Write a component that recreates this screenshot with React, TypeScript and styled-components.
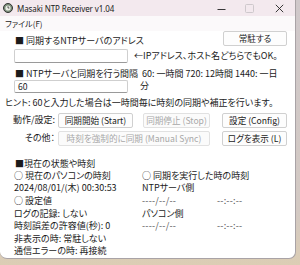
import React from "react";
import styled, { createGlobalStyle } from "styled-components";

const GlobalStyle = createGlobalStyle`
  html, body { margin: 0; padding: 0; }
  body {
    width: 300px;
    height: 265px;
    overflow: hidden;
    font-family: "Noto Sans CJK JP", "Noto Sans", sans-serif;
    color: #1b1b1b;
  }
`;

const Desktop = styled.div`
  width: 300px;
  height: 265px;
  background: linear-gradient(180deg, #cfc8ca 0%, #d3c9c3 80%, #dccdb4 100%);
`;

const Window = styled.div`
  width: 296px;
  height: 259px;
  box-sizing: border-box;
  border: 1px solid #a9a3a6;
  border-top: none;
  border-left: none;
  border-radius: 0 0 7px 7px;
  background: #ffffff;
  overflow: hidden;
  display: flex;
  flex-direction: column;
`;

const TitleBar = styled.div`
  height: 16px;
  background: #f3e9ee;
  display: flex;
  align-items: center;
  padding-left: 3px;
`;

const TitleText = styled.span`
  font-family: "Noto Sans", "Open Sans", sans-serif;
  font-size: 8px;
  margin-left: 4px;
  letter-spacing: -0.1px;
  color: #1a1a1a;
`;

const Spacer = styled.div`
  flex: 1;
`;

const CaptionButton = styled.div<{ $w: number }>`
  width: ${(p) => p.$w}px;
  height: 16px;
  display: flex;
  align-items: center;
  justify-content: center;
`;

const MenuBar = styled.div`
  height: 15px;
  display: flex;
  align-items: center;
  padding-left: 5px;
  font-size: 8px;
  background: #fbf9fa;
  font-feature-settings: "palt";
`;

const Client = styled.div`
  padding: 0 8px 0 5px;
  font-size: 9px;
  line-height: 12px;
  font-feature-settings: "palt";
  display: flex;
  flex-direction: column;
`;

const TopRow = styled.div`
  height: 16px;
  display: flex;
  justify-content: space-between;
`;

const Heading = styled.div<{ $indent?: number }>`
  padding-left: ${(p) => p.$indent ?? 10}px;
  align-self: flex-end;
  white-space: nowrap;
`;

const Button = styled.div<{ $w: number; $disabled?: boolean }>`
  width: ${(p) => p.$w}px;
  height: 15px;
  box-sizing: border-box;
  border: 1px solid ${(p) => (p.$disabled ? "#e1e1e1" : "#d0d0d0")};
  border-radius: 2px;
  background: ${(p) => (p.$disabled ? "#fbfbfb" : "#fdfdfd")};
  color: ${(p) => (p.$disabled ? "#a8a8a8" : "#1b1b1b")};
  font-size: 8.6px;
  display: flex;
  align-items: center;
  justify-content: center;
  white-space: nowrap;
  overflow: hidden;
`;

const FieldRow = styled.div<{ $top: number; $h: number }>`
  margin-top: ${(p) => p.$top}px;
  height: ${(p) => p.$h}px;
  display: flex;
  align-items: center;
  white-space: nowrap;
`;

const TextBox = styled.div<{ $h: number }>`
  margin-left: 9px;
  width: 114px;
  height: ${(p) => p.$h}px;
  box-sizing: border-box;
  border: 1px solid #cfcfcf;
  border-bottom-color: #9a9a9a;
  border-radius: 2px;
  background: #fff;
  display: flex;
  align-items: center;
  padding-left: 3px;
  font-size: 8.6px;
`;

const Note = styled.span<{ $left: number }>`
  margin-left: ${(p) => p.$left}px;
`;

const SplitRow = styled.div<{ $top: number }>`
  margin-top: ${(p) => p.$top}px;
  height: 12px;
  display: grid;
  grid-template-columns: 137px auto;
  white-space: nowrap;
`;

const Hint = styled.div`
  margin-top: 4px;
  height: 12px;
  white-space: nowrap;
`;

const ButtonRow = styled.div<{ $top: number }>`
  margin-top: ${(p) => p.$top}px;
  height: 15px;
  display: flex;
  align-items: center;
  white-space: nowrap;
`;

const RowLabel = styled.div`
  width: 53px;
  box-sizing: border-box;
  padding-right: 3px;
  text-align: right;
`;

const Gap = styled.div<{ $w: number }>`
  width: ${(p) => p.$w}px;
`;

const StatusGrid = styled.div`
  display: grid;
  grid-template-columns: 128px 75px auto;
  grid-auto-rows: 12.6px;
  padding-left: 9px;
  line-height: 12.6px;
  white-space: nowrap;
`;

const Cell = styled.div<{ $span?: number }>`
  grid-column: span ${(p) => p.$span ?? 1};
`;

const Dash = styled.span`
  color: #555;
  letter-spacing: 0.2px;
`;

const AppIcon = () => (
  <svg width="10" height="10" viewBox="0 0 10 10">
    <circle cx="5" cy="5" r="4.5" fill="#7d8f7a" stroke="#333" strokeWidth="1" />
    <circle cx="5" cy="5" r="2.6" fill="#e9ece4" />
    <path d="M5 3.2 V5 H6.4" stroke="#333" strokeWidth="0.8" fill="none" />
  </svg>
);

const App: React.FC = () => (
  <>
    <GlobalStyle />
    <Desktop>
      <Window>
        <TitleBar>
          <AppIcon />
          <TitleText>Masaki NTP Receiver v1.04</TitleText>
          <Spacer />
          <CaptionButton $w={28}>
            <svg width="9" height="9" viewBox="0 0 9 9">
              <path d="M0.5 5.5 H8.5" stroke="#222" strokeWidth="0.9" />
            </svg>
          </CaptionButton>
          <CaptionButton $w={28}>
            <svg width="9" height="9" viewBox="0 0 9 9">
              <rect x="0.5" y="0.5" width="8" height="8" rx="1" fill="none" stroke="#c9c4c7" strokeWidth="0.9" />
            </svg>
          </CaptionButton>
          <CaptionButton $w={32}>
            <svg width="9" height="9" viewBox="0 0 9 9">
              <path d="M0.8 0.8 L8.2 8.2 M8.2 0.8 L0.8 8.2" stroke="#222" strokeWidth="0.9" />
            </svg>
          </CaptionButton>
        </TitleBar>
        <MenuBar>ファイル(F)</MenuBar>
        <Client>
          <TopRow>
            <Heading>■ 同期するNTPサーバのアドレス</Heading>
            <Button $w={64}>常駐する</Button>
          </TopRow>
          <FieldRow $top={2} $h={14}>
            <TextBox $h={14} />
            <Note $left={6}>←IPアドレス、ホスト名どちらでもOK。</Note>
          </FieldRow>
          <SplitRow $top={5}>
            <Heading>■ NTPサーバと同期を行う間隔</Heading>
            <span>60: 一時間 720: 12時間 1440: 一日</span>
          </SplitRow>
          <FieldRow $top={0} $h={13}>
            <TextBox $h={13}>60</TextBox>
            <Note $left={12}>分</Note>
          </FieldRow>
          <Hint>ヒント: 60と入力した場合は一時間毎に時刻の同期や補正を行います。</Hint>
          <ButtonRow $top={4}>
            <RowLabel>動作/設定:</RowLabel>
            <Button $w={75}>同期開始 (Start)</Button>
            <Gap $w={10} />
            <Button $w={67} $disabled>同期停止 (Stop)</Button>
            <Gap $w={12} />
            <Button $w={65}>設定 (Config)</Button>
          </ButtonRow>
          <ButtonRow $top={3}>
            <RowLabel>その他：</RowLabel>
            <Button $w={152} $disabled>時刻を強制的に同期 (Manual Sync)</Button>
            <Gap $w={12} />
            <Button $w={65}>ログを表示 (L)</Button>
          </ButtonRow>
          <SplitRow $top={12}>
            <Heading>■現在の状態や時刻</Heading>
          </SplitRow>
          <StatusGrid>
            <Cell>○ 現在のパソコンの時刻</Cell>
            <Cell $span={2}>○ 同期を実行した時の時刻</Cell>
            <Cell>2024/08/01/(木) 00:30:53</Cell>
            <Cell $span={2}>NTPサーバ側</Cell>
            <Cell>○ 設定値</Cell>
            <Cell><Dash>----/--/--</Dash></Cell>
            <Cell><Dash>--:--:--</Dash></Cell>
            <Cell>ログの記録: しない</Cell>
            <Cell $span={2}>パソコン側</Cell>
            <Cell>時刻誤差の許容値(秒): 0</Cell>
            <Cell><Dash>----/--/--</Dash></Cell>
            <Cell><Dash>--:--:--</Dash></Cell>
            <Cell $span={3}>非表示の時: 常駐しない</Cell>
            <Cell $span={3}>通信エラーの時: 再接続</Cell>
          </StatusGrid>
        </Client>
      </Window>
    </Desktop>
  </>
);

export default App;
